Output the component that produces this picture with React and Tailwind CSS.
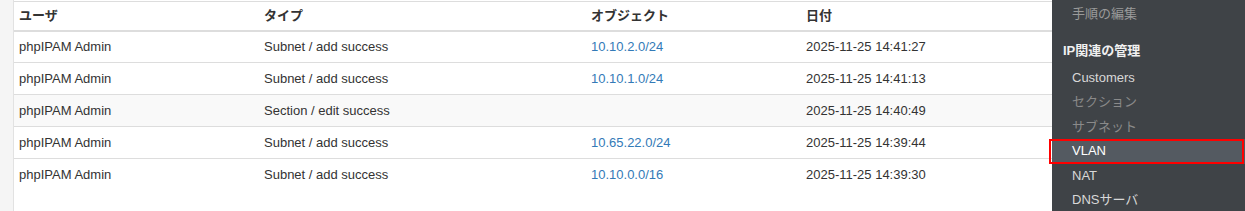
import React from "react";

const logs = [
  { user: "phpIPAM Admin", type: "Subnet / add success", obj: "10.10.2.0/24", date: "2025-11-25 14:41:27" },
  { user: "phpIPAM Admin", type: "Subnet / add success", obj: "10.10.1.0/24", date: "2025-11-25 14:41:13" },
  { user: "phpIPAM Admin", type: "Section / edit success", obj: "", date: "2025-11-25 14:40:49", shaded: true },
  { user: "phpIPAM Admin", type: "Subnet / add success", obj: "10.65.22.0/24", date: "2025-11-25 14:39:44" },
  { user: "phpIPAM Admin", type: "Subnet / add success", obj: "10.10.0.0/16", date: "2025-11-25 14:39:30" },
];

const menu = [
  { label: "Customers", color: "text-[#d8d8d8]" },
  { label: "セクション", color: "text-[#8a8a8a]" },
  { label: "サブネット", color: "text-[#8a8a8a]" },
  { label: "VLAN", color: "text-white", active: true },
  { label: "NAT", color: "text-[#d8d8d8]" },
  { label: "DNSサーバ", color: "text-[#d8d8d8]" },
];

function LogTable() {
  return (
    <div className="flex-1 bg-white border-l border-[#e2e2e2]">
      <table className="w-full table-fixed border-collapse mt-px border-t border-[#dddddd]">
        <colgroup>
          <col className="w-[245px]" />
          <col className="w-[327px]" />
          <col className="w-[215px]" />
          <col />
        </colgroup>
        <thead>
          <tr className="h-[29px] border-b-2 border-[#dddddd]">
            <th className="px-[5px] text-left font-bold">ユーザ</th>
            <th className="px-[5px] text-left font-bold">タイプ</th>
            <th className="px-[5px] text-left font-bold">オブジェクト</th>
            <th className="px-[5px] text-left font-bold">日付</th>
          </tr>
        </thead>
        <tbody>
          {logs.map((row, i) => (
            <tr
              key={i}
              className={`h-[32px] ${i < logs.length - 1 ? "border-b border-[#dddddd]" : ""} ${
                row.shaded ? "bg-[#f9f9f9]" : ""
              }`}
            >
              <td className="px-[5px]">{row.user}</td>
              <td className="px-[5px]">{row.type}</td>
              <td className="px-[5px] text-[#337ab7]">{row.obj}</td>
              <td className="px-[5px]">{row.date}</td>
            </tr>
          ))}
        </tbody>
      </table>
    </div>
  );
}

function SideMenu() {
  return (
    <div className="w-[193px] shrink-0 bg-[#3f4347] pt-[2px]">
      <div className="h-[24px] leading-[24px] pl-[20px] text-[#9a9a9a]">手順の編集</div>
      <div className="mt-[13px] h-[24px] leading-[24px] pl-[11px] font-bold text-[#f0f0f0]">IP関連の管理</div>
      <div className="mt-[3px]">
        {menu.map((m) => (
          <div
            key={m.label}
            className={`relative h-[24.4px] leading-[24.4px] pl-[20px] ${m.color} ${
              m.active ? "bg-[#545a61]" : ""
            }`}
          >
            {m.label}
            {m.active && (
              <span className="absolute -left-[3px] right-px top-0 bottom-0 border-2 border-[#ff0000]" />
            )}
          </div>
        ))}
      </div>
    </div>
  );
}

export default function App() {
  return (
    <div className="flex w-[1245px] h-[211px] overflow-hidden bg-[#f5f5f5] pl-[13px] text-[13px] text-[#333333] font-['Liberation_Sans','Noto_Sans_CJK_JP',sans-serif]">
      <LogTable />
      <SideMenu />
    </div>
  );
}
